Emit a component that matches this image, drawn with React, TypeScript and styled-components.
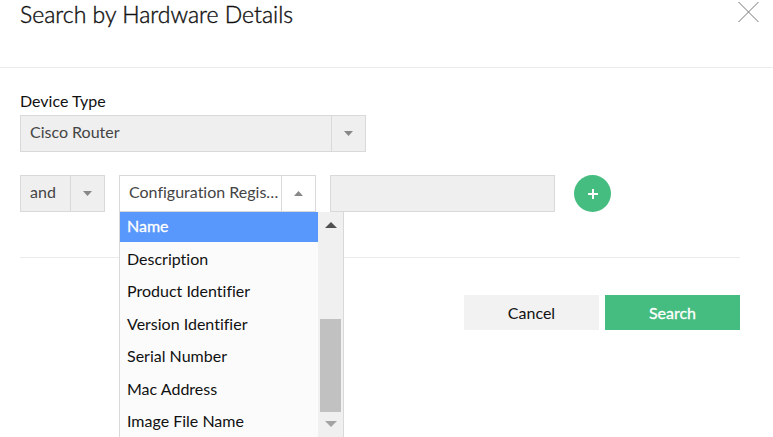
import React, { useState } from "react";
import styled, { createGlobalStyle } from "styled-components";

const GlobalStyle = createGlobalStyle`
  *, *::before, *::after { box-sizing: border-box; }
  html, body { margin: 0; padding: 0; background: #fff; }
  body, button, input, select {
    font-family: Lato, "Liberation Sans", sans-serif;
    font-size: 16px;
    font-variant-ligatures: none;
    color: #111;
  }
`;

const Dialog = styled.section`
  width: 100%;
  height: 100vh;
  overflow: hidden;
`;

const Header = styled.header`
  display: flex;
  justify-content: space-between;
  align-items: flex-start;
  height: 68px;
  padding: 0 14px 0 20px;
  border-bottom: 1px solid #ebebeb;
`;

const Title = styled.h1`
  margin: 0;
  font-size: 23px;
  line-height: 28px;
  font-weight: 300;
  -webkit-text-stroke: 0.4px #111;
`;

const CloseButton = styled.button`
  display: flex;
  padding: 1px 0;
  border: 0;
  background: none;
  cursor: pointer;
`;

const Form = styled.form`
  display: flex;
  flex-direction: column;
  padding: 23px 33px 0 20px;
`;

const Label = styled.label`
  line-height: 20px;
  padding-bottom: 4px;
`;

const SelectBox = styled.div<{ $width: number; $open?: boolean }>`
  position: relative;
  display: flex;
  flex: 0 0 auto;
  width: ${(p) => p.$width}px;
  height: 37px;
  border: 1px solid #d9d9d9;
  background: ${(p) => (p.$open ? "#fff" : "#efefef")};
`;

const Select = styled.select`
  appearance: none;
  flex: 1;
  min-width: 0;
  margin: 0 -34px 0 0;
  padding: 0 36px 4px 9px;
  border: 0;
  outline: 0;
  border-radius: 0;
  background: transparent;
  color: #444;
  overflow: hidden;
  white-space: nowrap;
  text-overflow: ellipsis;
`;

const ArrowCell = styled.span`
  display: flex;
  align-items: center;
  justify-content: center;
  flex: 0 0 34px;
  border-left: 1px solid #d9d9d9;
  pointer-events: none;
`;

const Criteria = styled.div`
  display: flex;
  align-items: center;
  margin-top: 23px;
  padding-bottom: 45px;
  border-bottom: 1px solid #ebebeb;
`;

const FieldPicker = styled.div`
  position: relative;
  margin: 0 14px;
`;

const ValueInput = styled.input`
  flex: 0 1 225px;
  min-width: 0;
  height: 37px;
  padding: 0 9px;
  border: 1px solid #d9d9d9;
  border-radius: 0;
  background: #efefef;
`;

const AddButton = styled.button`
  display: flex;
  align-items: center;
  justify-content: center;
  flex: 0 0 37px;
  height: 37px;
  margin-left: 19px;
  padding: 1px 0 0;
  border: 0;
  border-radius: 50%;
  background: #46bd80;
  cursor: pointer;
`;

const Menu = styled.div`
  position: absolute;
  top: 100%;
  left: 0;
  z-index: 1;
  display: flex;
  width: 225px;
  height: 226px;
  border: solid #d9d9d9;
  border-width: 0 1px 1px;
  background: #fbfbfb;
`;

const OptionList = styled.ul`
  display: flex;
  flex: 1;
  flex-direction: column;
  justify-content: space-between;
  margin: 0;
  padding: 0;
  list-style: none;
`;

const Option = styled.li<{ $active: boolean }>`
  height: 30px;
  padding-left: 7px;
  line-height: 28px;
  color: ${(p) => (p.$active ? "#fff" : "#111")};
  background: ${(p) => (p.$active ? "#5897fb" : "transparent")};
  -webkit-text-stroke: ${(p) => (p.$active ? "0.3px #fff" : "0")};
  cursor: pointer;
`;

const ScrollTrack = styled.div`
  display: flex;
  flex-direction: column;
  align-items: center;
  width: 25px;
  padding: 10px 2px;
  background: #f0f0f0;
`;

const ScrollThumb = styled.div`
  align-self: stretch;
  height: 93px;
  margin: auto 0 9px;
  background: #c1c1c1;
`;

const Actions = styled.div`
  display: flex;
  justify-content: flex-end;
  gap: 6px;
  padding-top: 37px;
`;

const ActionButton = styled.button<{ $primary?: boolean }>`
  width: 135px;
  height: 35px;
  padding: 0;
  border: 0;
  background: ${(p) => (p.$primary ? "#46bd80" : "#f2f2f2")};
  color: ${(p) => (p.$primary ? "#fff" : "#111")};
  -webkit-text-stroke: ${(p) => (p.$primary ? "0.3px #fff" : "0")};
  cursor: pointer;
`;

function Arrow({ up = false }: { up?: boolean }) {
  return (
    <svg width="9" height="5" viewBox="0 0 9 5" aria-hidden="true">
      <path d={up ? "M0 5L4.5 0L9 5Z" : "M0 0H9L4.5 5Z"} fill="#888" />
    </svg>
  );
}

function ScrollArrow({ up = false }: { up?: boolean }) {
  return (
    <svg width="12" height="6" viewBox="0 0 12 6" aria-hidden="true">
      <path d={up ? "M0 6L6 0L12 6Z" : "M0 0H12L6 6Z"} fill={up ? "#505050" : "#a3a3a3"} />
    </svg>
  );
}

const FIELDS = [
  "Name",
  "Description",
  "Product Identifier",
  "Version Identifier",
  "Serial Number",
  "Mac Address",
  "Image File Name",
];

export default function App() {
  const [active, setActive] = useState("Name");

  return (
    <Dialog role="dialog" aria-labelledby="dialog-title">
      <GlobalStyle />
      <Header>
        <Title id="dialog-title">Search by Hardware Details</Title>
        <CloseButton type="button" aria-label="Close">
          <svg width="21" height="22" viewBox="0 0 21 22" fill="none" stroke="#777" strokeWidth="1">
            <path d="M0.5 1L20.5 21M20.5 1L0.5 21" />
          </svg>
        </CloseButton>
      </Header>
      <Form onSubmit={(e) => e.preventDefault()}>
        <Label htmlFor="device-type">Device Type</Label>
        <SelectBox $width={346}>
          <Select id="device-type" defaultValue="Cisco Router">
            <option>Cisco Router</option>
          </Select>
          <ArrowCell>
            <Arrow />
          </ArrowCell>
        </SelectBox>
        <Criteria>
          <SelectBox $width={85}>
            <Select aria-label="Operator" defaultValue="and">
              <option>and</option>
              <option>or</option>
            </Select>
            <ArrowCell>
              <Arrow />
            </ArrowCell>
          </SelectBox>
          <FieldPicker>
            <SelectBox $width={197} $open>
              <Select aria-label="Field" defaultValue="Configuration Register">
                <option>Configuration Register</option>
                {FIELDS.map((f) => (
                  <option key={f}>{f}</option>
                ))}
              </Select>
              <ArrowCell>
                <Arrow up />
              </ArrowCell>
            </SelectBox>
            <Menu>
              <OptionList role="listbox" aria-label="Fields">
                {FIELDS.map((f) => (
                  <Option
                    key={f}
                    role="option"
                    aria-selected={f === active}
                    $active={f === active}
                    onMouseEnter={() => setActive(f)}
                  >
                    {f}
                  </Option>
                ))}
              </OptionList>
              <ScrollTrack>
                <ScrollArrow up />
                <ScrollThumb />
                <ScrollArrow />
              </ScrollTrack>
            </Menu>
          </FieldPicker>
          <ValueInput type="text" aria-label="Value" />
          <AddButton type="button" aria-label="Add condition">
            <svg width="10" height="10" viewBox="0 0 10 10" stroke="#fff" strokeWidth="2">
              <path d="M5 0V10M0 5H10" />
            </svg>
          </AddButton>
        </Criteria>
        <Actions>
          <ActionButton type="button">Cancel</ActionButton>
          <ActionButton type="submit" $primary>
            Search
          </ActionButton>
        </Actions>
      </Form>
    </Dialog>
  );
}
